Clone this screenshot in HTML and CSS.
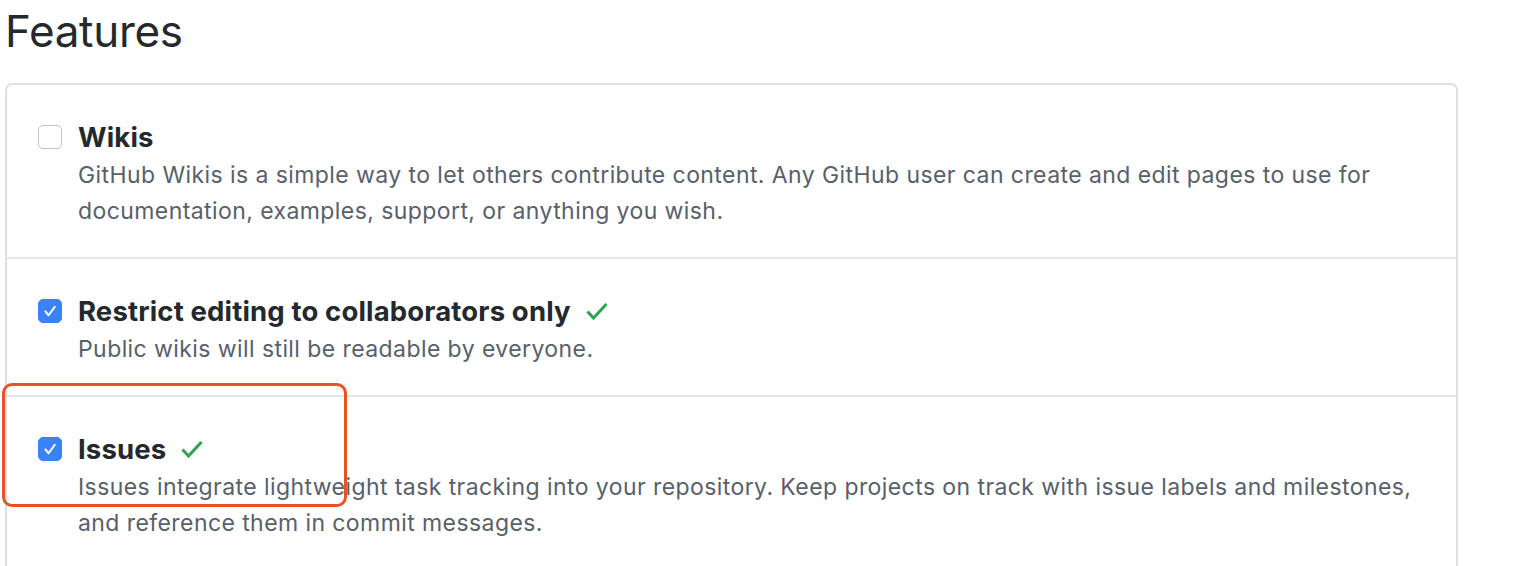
FILE: index.html
```html
<!DOCTYPE html>
<html>
<head>
<meta charset="utf-8">
<link rel="stylesheet" href="styles.css">
</head>
<body>
<div class="page">
  <h1 class="title">Features</h1>
  <div class="box">
    <div class="item">
      <span class="cb"></span>
      <div class="body">
        <div class="head">Wikis</div>
        <p class="desc">GitHub Wikis is a simple way to let others contribute content. Any GitHub user can create and edit pages to use for documentation, examples, support, or anything you wish.</p>
      </div>
    </div>
    <div class="item">
      <span class="cb on"><svg viewBox="0 0 24 24" width="20" height="20"><path d="M6.5 12.5l3.8 4.6 7.4-10" fill="none" stroke="#fff" stroke-width="2.4" stroke-linecap="round" stroke-linejoin="round"/></svg></span>
      <div class="body">
        <div class="head">Restrict editing to collaborators only <svg class="ok" viewBox="0 0 24 20" width="24" height="20"><path d="M2.5 10.5l6 6.5L21.5 3" fill="none" stroke="#2ea44f" stroke-width="3"/></svg></div>
        <p class="desc">Public wikis will still be readable by everyone.</p>
      </div>
    </div>
    <div class="item">
      <span class="cb on"><svg viewBox="0 0 24 24" width="20" height="20"><path d="M6.5 12.5l3.8 4.6 7.4-10" fill="none" stroke="#fff" stroke-width="2.4" stroke-linecap="round" stroke-linejoin="round"/></svg></span>
      <div class="body">
        <div class="head">Issues <svg class="ok" viewBox="0 0 24 20" width="24" height="20"><path d="M2.5 10.5l6 6.5L21.5 3" fill="none" stroke="#2ea44f" stroke-width="3"/></svg></div>
        <p class="desc">Issues integrate lightweight task tracking into your repository. Keep projects on track with issue labels and milestones, and reference them in commit messages.</p>
      </div>
    </div>
  </div>
  <div class="mark"></div>
</div>
</body>
</html>
```
FILE: styles.css
```css
html, body {
  margin: 0;
  padding: 0;
  background: #fff;
}
.page {
  position: relative;
  padding: 0 0 0 5px;
  width: 1453px;
  font-family: Inter, "Noto Sans", sans-serif;
  color: #24292e;
}
.title {
  margin: 0;
  padding-top: 3px;
  height: 80px;
  font-size: 44px;
  line-height: 56px;
  font-weight: 400;
  letter-spacing: -0.3px;
}
.box {
  border: 2px solid #dcdfe3;
  border-bottom: none;
  border-radius: 7px 7px 0 0;
  height: 500px;
}
.item {
  display: flex;
  align-items: flex-start;
  gap: 16px;
  padding: 32px 30px 28px 32px;
  border-bottom: 2px solid #e3e6e9;
}
.item:last-child {
  border-bottom: none;
}
.cb {
  flex: none;
  width: 24px;
  height: 24px;
  margin-top: 8px;
  margin-left: -1px;
  box-sizing: border-box;
  border: 1.5px solid #c4c4c4;
  border-radius: 5px;
  background: #fff;
  display: flex;
  align-items: center;
  justify-content: center;
}
.cb.on {
  background: #3a82f6;
  border-color: #3a82f6;
}
.body {
  flex: 1;
  min-width: 0;
}
.head {
  display: flex;
  align-items: center;
  gap: 14px;
  font-size: 27.5px;
  line-height: 40px;
  font-weight: 700;
  letter-spacing: 0.15px;
}
.ok {
  flex: none;
}
.desc {
  margin: 0;
  font-size: 23px;
  line-height: 36px;
  letter-spacing: 0.42px;
  color: #586069;
}
.mark {
  position: absolute;
  left: 2px;
  top: 383px;
  width: 345px;
  height: 124px;
  box-sizing: border-box;
  border: 3.5px solid #ea5127;
  border-radius: 10px;
}
```
